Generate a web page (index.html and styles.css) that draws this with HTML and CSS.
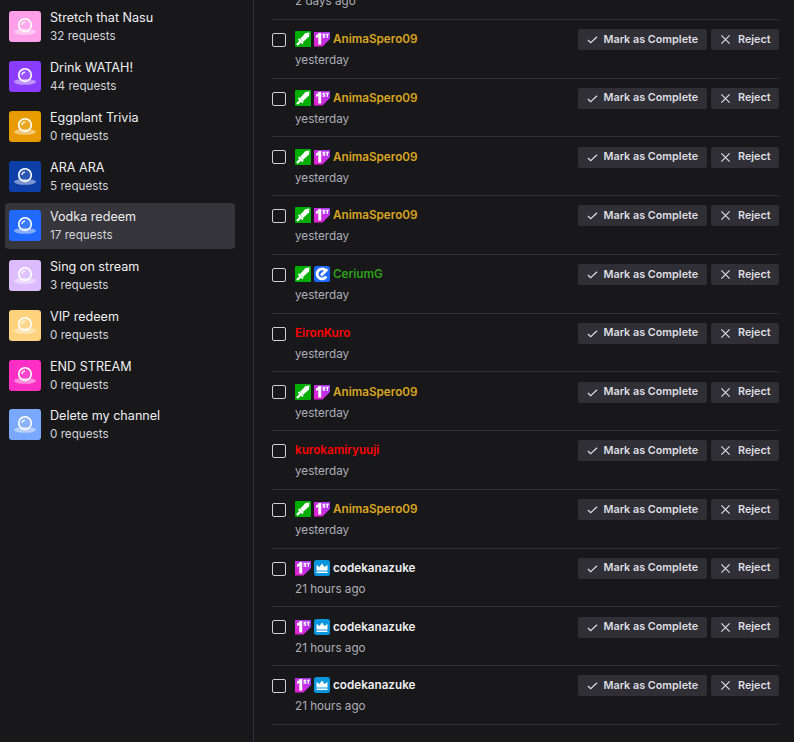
FILE: index.html
```html
<!DOCTYPE html>
<html lang="en">
<head>
  <meta charset="UTF-8">
  <meta name="viewport" content="width=device-width, initial-scale=1.0">
  <title>Reward requests</title>
  <link rel="stylesheet" href="styles.css">
</head>
<body>
  <svg class="defs" width="0" height="0">
    <symbol id="point" viewBox="0 0 32 32">
      <ellipse cx="16" cy="21.500" rx="11.500" ry="3" fill="#fff" fill-opacity=".45"/>
      <circle cx="16" cy="14.500" r="6.500" fill="#fff" fill-opacity=".12" stroke="#fff" stroke-width="1.700"/>
      <path d="M13 14.500a3 3 0 0 1 3-3" fill="none" stroke="#fff" stroke-width="1.300"/>
    </symbol>
    <symbol id="sword" viewBox="0 0 16 16">
      <rect width="16" height="16" rx="1" fill="#00ad03"/>
      <path d="M14.500 1.500L14 5.500l-6 5.500-3-3 5.500-6z" fill="#fff"/>
      <path d="M3.500 8l4.500 4.500" stroke="#fff" stroke-width="1.800"/>
      <path d="M5.500 10.500l-3.500 3.500" stroke="#fff" stroke-width="2.400"/>
    </symbol>
    <symbol id="first" viewBox="0 0 16 16">
      <linearGradient id="first-fill" x1="0" y1="1" x2="1" y2="0">
        <stop offset="0" stop-color="#e81fd0"/>
        <stop offset="1" stop-color="#a33df2"/>
      </linearGradient>
      <path d="M0 1h16v7l-7.500 7.500H0z" fill="url(#first-fill)"/>
      <path d="M2 4.500l2.400-1.500V2h2.800v11.500H4.300V6l-2.300 1z" fill="#fff"/>
      <path d="M8.600 2.700h2.600v1H9.800v.6h1.400v2.400H8.600v-1h1.400V5.200H8.600z M11.700 2.700h3.300v1h-1v3h-1.300v-3h-1z" fill="#fff"/>
    </symbol>
    <symbol id="wrench" viewBox="0 0 16 16">
      <rect width="16" height="16" rx="2.500" fill="#1f69ff"/>
      <path d="M11.800 4.500A5 5 0 1 0 12.300 10.500" fill="none" stroke="#fff" stroke-width="2.800"/>
      <path d="M13.300 3.300L7 9.500" stroke="#fff" stroke-width="2.800"/>
    </symbol>
    <symbol id="crown" viewBox="0 0 16 16">
      <rect width="16" height="16" rx="2.500" fill="#0a95dc"/>
      <path d="M2.500 5l3 2L8 3.500 10.500 7l3-2v5.500h-11z M2.500 11.500h11V13h-11z" fill="#fff"/>
    </symbol>
    <symbol id="check" viewBox="0 0 12 12">
      <path d="M1 6.500l3 3 7-6.500" fill="none" stroke="currentColor" stroke-width="1.300"/>
    </symbol>
    <symbol id="cross" viewBox="0 0 12 12">
      <path d="M1.500 1.500l9 9M10.500 1.500l-9 9" fill="none" stroke="currentColor" stroke-width="1.300"/>
    </symbol>
  </svg>

  <div class="page">
    <aside class="sidebar">
      <div class="reward">
        <div class="reward-icon pink"><svg><use href="#point"/></svg></div>
        <div><div class="reward-name">Stretch that Nasu</div><div class="reward-count">32 requests</div></div>
      </div>
      <div class="reward">
        <div class="reward-icon violet"><svg><use href="#point"/></svg></div>
        <div><div class="reward-name">Drink WATAH!</div><div class="reward-count">44 requests</div></div>
      </div>
      <div class="reward">
        <div class="reward-icon amber"><svg><use href="#point"/></svg></div>
        <div><div class="reward-name">Eggplant Trivia</div><div class="reward-count">0 requests</div></div>
      </div>
      <div class="reward">
        <div class="reward-icon navy"><svg><use href="#point"/></svg></div>
        <div><div class="reward-name">ARA ARA</div><div class="reward-count">5 requests</div></div>
      </div>
      <div class="reward active">
        <div class="reward-icon blue"><svg><use href="#point"/></svg></div>
        <div><div class="reward-name">Vodka redeem</div><div class="reward-count">17 requests</div></div>
      </div>
      <div class="reward">
        <div class="reward-icon lilac"><svg><use href="#point"/></svg></div>
        <div><div class="reward-name">Sing on stream</div><div class="reward-count">3 requests</div></div>
      </div>
      <div class="reward">
        <div class="reward-icon peach"><svg><use href="#point"/></svg></div>
        <div><div class="reward-name">VIP redeem</div><div class="reward-count">0 requests</div></div>
      </div>
      <div class="reward">
        <div class="reward-icon magenta"><svg><use href="#point"/></svg></div>
        <div><div class="reward-name">END STREAM</div><div class="reward-count">0 requests</div></div>
      </div>
      <div class="reward">
        <div class="reward-icon sky"><svg><use href="#point"/></svg></div>
        <div><div class="reward-name">Delete my channel</div><div class="reward-count">0 requests</div></div>
      </div>
    </aside>

    <main class="queue">
      <div class="queue-list">
        <div class="request">
          <div class="request-main">
            <div class="check-box"></div>
            <div><div class="user"></div><div class="time">2 days ago</div></div>
          </div>
        </div>

        <div class="request">
          <div class="request-main">
            <div class="check-box"></div>
            <div>
              <div class="user gold"><svg class="badge"><use href="#sword"/></svg><svg class="badge"><use href="#first"/></svg>AnimaSpero09</div>
              <div class="time">yesterday</div>
            </div>
          </div>
          <div class="actions">
            <button class="btn btn-complete"><svg><use href="#check"/></svg>Mark as Complete</button>
            <button class="btn btn-reject"><svg><use href="#cross"/></svg>Reject</button>
          </div>
        </div>

        <div class="request">
          <div class="request-main">
            <div class="check-box"></div>
            <div>
              <div class="user gold"><svg class="badge"><use href="#sword"/></svg><svg class="badge"><use href="#first"/></svg>AnimaSpero09</div>
              <div class="time">yesterday</div>
            </div>
          </div>
          <div class="actions">
            <button class="btn btn-complete"><svg><use href="#check"/></svg>Mark as Complete</button>
            <button class="btn btn-reject"><svg><use href="#cross"/></svg>Reject</button>
          </div>
        </div>

        <div class="request">
          <div class="request-main">
            <div class="check-box"></div>
            <div>
              <div class="user gold"><svg class="badge"><use href="#sword"/></svg><svg class="badge"><use href="#first"/></svg>AnimaSpero09</div>
              <div class="time">yesterday</div>
            </div>
          </div>
          <div class="actions">
            <button class="btn btn-complete"><svg><use href="#check"/></svg>Mark as Complete</button>
            <button class="btn btn-reject"><svg><use href="#cross"/></svg>Reject</button>
          </div>
        </div>

        <div class="request">
          <div class="request-main">
            <div class="check-box"></div>
            <div>
              <div class="user gold"><svg class="badge"><use href="#sword"/></svg><svg class="badge"><use href="#first"/></svg>AnimaSpero09</div>
              <div class="time">yesterday</div>
            </div>
          </div>
          <div class="actions">
            <button class="btn btn-complete"><svg><use href="#check"/></svg>Mark as Complete</button>
            <button class="btn btn-reject"><svg><use href="#cross"/></svg>Reject</button>
          </div>
        </div>

        <div class="request">
          <div class="request-main">
            <div class="check-box"></div>
            <div>
              <div class="user green"><svg class="badge"><use href="#sword"/></svg><svg class="badge"><use href="#wrench"/></svg>CeriumG</div>
              <div class="time">yesterday</div>
            </div>
          </div>
          <div class="actions">
            <button class="btn btn-complete"><svg><use href="#check"/></svg>Mark as Complete</button>
            <button class="btn btn-reject"><svg><use href="#cross"/></svg>Reject</button>
          </div>
        </div>

        <div class="request">
          <div class="request-main">
            <div class="check-box"></div>
            <div>
              <div class="user red">EironKuro</div>
              <div class="time">yesterday</div>
            </div>
          </div>
          <div class="actions">
            <button class="btn btn-complete"><svg><use href="#check"/></svg>Mark as Complete</button>
            <button class="btn btn-reject"><svg><use href="#cross"/></svg>Reject</button>
          </div>
        </div>

        <div class="request">
          <div class="request-main">
            <div class="check-box"></div>
            <div>
              <div class="user gold"><svg class="badge"><use href="#sword"/></svg><svg class="badge"><use href="#first"/></svg>AnimaSpero09</div>
              <div class="time">yesterday</div>
            </div>
          </div>
          <div class="actions">
            <button class="btn btn-complete"><svg><use href="#check"/></svg>Mark as Complete</button>
            <button class="btn btn-reject"><svg><use href="#cross"/></svg>Reject</button>
          </div>
        </div>

        <div class="request">
          <div class="request-main">
            <div class="check-box"></div>
            <div>
              <div class="user red">kurokamiryuuji</div>
              <div class="time">yesterday</div>
            </div>
          </div>
          <div class="actions">
            <button class="btn btn-complete"><svg><use href="#check"/></svg>Mark as Complete</button>
            <button class="btn btn-reject"><svg><use href="#cross"/></svg>Reject</button>
          </div>
        </div>

        <div class="request">
          <div class="request-main">
            <div class="check-box"></div>
            <div>
              <div class="user gold"><svg class="badge"><use href="#sword"/></svg><svg class="badge"><use href="#first"/></svg>AnimaSpero09</div>
              <div class="time">yesterday</div>
            </div>
          </div>
          <div class="actions">
            <button class="btn btn-complete"><svg><use href="#check"/></svg>Mark as Complete</button>
            <button class="btn btn-reject"><svg><use href="#cross"/></svg>Reject</button>
          </div>
        </div>

        <div class="request">
          <div class="request-main">
            <div class="check-box"></div>
            <div>
              <div class="user white"><svg class="badge"><use href="#first"/></svg><svg class="badge"><use href="#crown"/></svg>codekanazuke</div>
              <div class="time">21 hours ago</div>
            </div>
          </div>
          <div class="actions">
            <button class="btn btn-complete"><svg><use href="#check"/></svg>Mark as Complete</button>
            <button class="btn btn-reject"><svg><use href="#cross"/></svg>Reject</button>
          </div>
        </div>

        <div class="request">
          <div class="request-main">
            <div class="check-box"></div>
            <div>
              <div class="user white"><svg class="badge"><use href="#first"/></svg><svg class="badge"><use href="#crown"/></svg>codekanazuke</div>
              <div class="time">21 hours ago</div>
            </div>
          </div>
          <div class="actions">
            <button class="btn btn-complete"><svg><use href="#check"/></svg>Mark as Complete</button>
            <button class="btn btn-reject"><svg><use href="#cross"/></svg>Reject</button>
          </div>
        </div>

        <div class="request">
          <div class="request-main">
            <div class="check-box"></div>
            <div>
              <div class="user white"><svg class="badge"><use href="#first"/></svg><svg class="badge"><use href="#crown"/></svg>codekanazuke</div>
              <div class="time">21 hours ago</div>
            </div>
          </div>
          <div class="actions">
            <button class="btn btn-complete"><svg><use href="#check"/></svg>Mark as Complete</button>
            <button class="btn btn-reject"><svg><use href="#cross"/></svg>Reject</button>
          </div>
        </div>
      </div>
    </main>
  </div>
</body>
</html>
```

FILE: styles.css
```css
:root {
  --bg: #18181b;
  --line: #2f2f35;
  --muted: #adadb8;
  --text: #efeff1;
}

html, body {
  margin: 0;
  height: 100%;
  overflow: hidden;
}

body {
  background: var(--bg);
  color: var(--text);
  font-family: Inter, 'Noto Sans', sans-serif;
  font-size: 11.7px;
}

.defs {
  position: absolute;
}

.page {
  display: flex;
  height: 742px;
  overflow: hidden;
}

/* reward list */
.sidebar {
  box-sizing: border-box;
  width: 254px;
  flex-shrink: 0;
  border-right: 1px solid var(--line);
  padding: 4px 18px 0 5px;
}

.reward {
  display: flex;
  align-items: center;
  gap: 9px;
  height: 45.500px;
  margin-bottom: 4.250px;
  padding: 0 4px;
  border-radius: 4px;
}

.reward.active {
  background: #35353b;
}

.reward-icon {
  width: 32px;
  height: 31px;
  border-radius: 3px;
  flex-shrink: 0;
}

.reward-icon svg {
  display: block;
  width: 32px;
  height: 31px;
}

.reward-name {
  font-size: 12.600px;
  line-height: 18px;
  margin-top: 1.500px;
}

.reward-count {
  line-height: 18.500px;
  color: #d3d3d9;
}

.pink { background: #ff9fea; }
.violet { background: #8b3dff; }
.amber { background: #e89b00; }
.navy { background: #0e3fa8; }
.blue { background: #1f69ff; }
.lilac { background: #dcbcff; }
.peach { background: #ffd27d; }
.magenta { background: #ff2ec4; }
.sky { background: #7aa8ff; }

/* request queue */
.queue {
  flex: 1;
  padding: 0 15px 0 18px;
  min-width: 0;
}

.queue-list {
  margin-top: -39px;
}

.request {
  display: flex;
  justify-content: space-between;
  box-sizing: border-box;
  height: 58.750px;
  padding-top: 9.400px;
  border-bottom: 1px solid var(--line);
}

.request-main {
  display: flex;
  gap: 9px;
}

.check-box {
  box-sizing: border-box;
  width: 14px;
  height: 14px;
  margin-top: 3.700px;
  border: 1px solid #cfcfd4;
  border-radius: 2px;
}

.user {
  display: flex;
  align-items: center;
  height: 20px;
  font-weight: 600;
}

.badge {
  width: 16px;
  height: 16px;
  margin-right: 3px;
}

.time {
  margin-top: 2px;
  line-height: 18px;
  color: var(--muted);
}

.gold { color: #daa520; }
.green { color: #2e9f18; }
.red { color: #ff0000; }
.white { color: #efeff1; }

.actions {
  display: flex;
  gap: 4px;
}

.btn {
  display: flex;
  align-items: center;
  height: 21px;
  padding: 0 0 1px 9px;
  border: none;
  border-radius: 2px;
  background: var(--line);
  color: #dedee3;
  font-family: inherit;
  font-size: 10.800px;
  font-weight: 600;
}

.btn svg {
  width: 11px;
  height: 11px;
  margin-right: 5.500px;
  margin-top: 1px;
}

.btn-complete {
  width: 129px;
}

.btn-reject {
  width: 68px;
}

.btn-reject svg {
  margin-right: 7px;
}
```
